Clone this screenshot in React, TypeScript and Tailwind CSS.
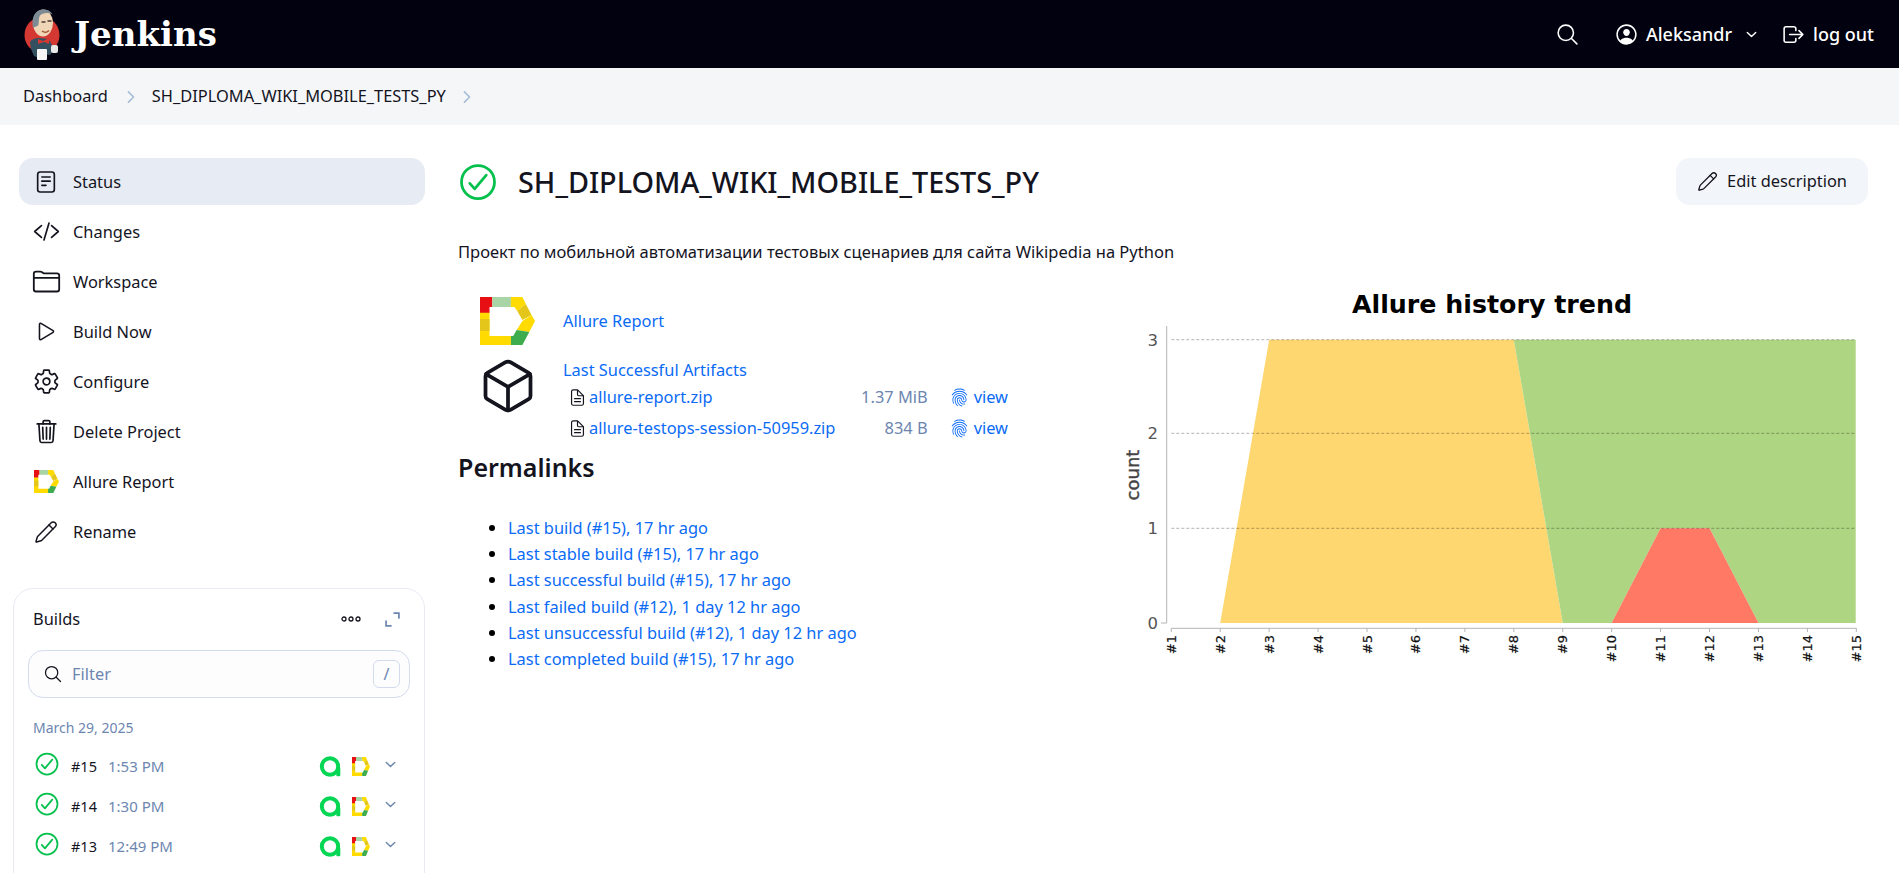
import React from "react";
import {
  IoCheckmarkCircleOutline,
  IoChevronDown,
  IoChevronForward,
  IoCodeSlashOutline,
  IoCubeOutline,
  IoDocumentTextOutline,
  IoFingerPrintOutline,
  IoFolderOutline,
  IoLogOutOutline,
  IoPersonCircleOutline,
  IoPlayOutline,
  IoSearchOutline,
  IoSettingsOutline,
  IoTrashOutline,
} from "react-icons/io5";
import { Pencil } from "lucide-react";

function AllureIcon({ className }: { className?: string }) {
  return (
    <svg viewBox="0 0 48 48" preserveAspectRatio="none" className={className}>
      <polygon fill="#ffdb00" points="0,15 8.3,15 8.3,39 27,39 27,48 0,48" />
      <polygon fill="#e3c619" points="0,22 8.3,22 8.3,34 0,34" />
      <polygon fill="#e70f14" points="0,0 10.7,0 10.7,10 8.3,10 8.3,15.7 0,15.7" />
      <polygon fill="#a9d5a6" points="10.7,0 27,0 27,10 10.7,10" />
      <polygon fill="#ffdb00" points="27,0 37,0 40,7 32.5,14 30,10 27,10" />
      <polygon fill="#e3c619" points="40,7 45,18 37,23 32.5,14" />
      <polygon fill="#ffdb00" points="45,18 48,24 43,35 32,33 37,24" />
      <polygon fill="#3dac4f" points="32,33 43,35 37,48 27,48 27,39 29,39" />
    </svg>
  );
}

function AqaIcon() {
  return (
    <svg viewBox="0 0 20 20" className="w-[22px] h-[21px]">
      <circle cx="10" cy="10" r="7.8" fill="none" stroke="#05d653" strokeWidth="3.8" />
      <rect x="16" y="11" width="3.8" height="8.4" rx="1" fill="#05d653" />
    </svg>
  );
}

function StatusDoc() {
  return (
    <svg viewBox="0 0 24 28" className="w-[20px] h-[24px]" fill="none" stroke="#14141f" strokeWidth="2" strokeLinecap="round">
      <rect x="2" y="2" width="20" height="24" rx="3" />
      <path d="M7 8h10M7 13h10M7 18h5" />
    </svg>
  );
}

function JenkinsLogo() {
  return (
    <svg viewBox="0 0 40 52" className="w-[40px] h-[52px]">
      <ellipse cx="19" cy="27" rx="17.5" ry="18" fill="#d33833" />
      <path d="M7 34c2-3 5-4 9-4l9 1c3 3 5 7 5 12l-3 4-6-1-3 5-7-3-3-7z" fill="#335061" />
      <ellipse cx="20" cy="15" rx="10" ry="13.5" fill="#f0d6b7" />
      <path d="M10 20C8 9 12 2 20 1.5c5-.3 8 2 9.5 5-5-2.5-10-1.5-12.5 1-1.5 2-1 6-1.5 9-.5 2-3.5 2-5.5 3.5z" fill="#7d8b94" />
      <path d="M19 14h3M25 13h3" stroke="#4a3b32" strokeWidth="1.4" strokeLinecap="round" />
      <path d="M19 23c2 1.5 5 1.5 7-.5" stroke="#a0522d" strokeWidth="1.2" fill="none" />
      <path d="M15 31l5 2 6-3v6l-5-2-6 2z" fill="#d33833" />
      <rect x="14" y="41" width="10" height="11" rx="1" fill="#f6f6f6" />
      <rect x="28" y="37" width="7" height="8" rx="2" fill="#e8e8e8" />
    </svg>
  );
}

function Task({ icon, label, active }: { icon: React.ReactNode; label: string; active?: boolean }) {
  return (
    <div className={`flex items-center h-[47px] rounded-[14px] pl-[12px] ${active ? "bg-[#e7ebf3]" : ""}`}>
      <span className="w-[30px] flex justify-center text-[#14141f]">{icon}</span>
      <span className="ml-[12px] pt-[1px] text-[#14141f]">{label}</span>
    </div>
  );
}

const TASKS: { icon: React.ReactNode; label: string; active?: boolean }[] = [
  { icon: <StatusDoc />, label: "Status", active: true },
  { icon: <IoCodeSlashOutline size={27} />, label: "Changes" },
  { icon: <IoFolderOutline size={29} />, label: "Workspace" },
  { icon: <IoPlayOutline size={25} />, label: "Build Now" },
  { icon: <IoSettingsOutline size={27} />, label: "Configure" },
  { icon: <IoTrashOutline size={27} />, label: "Delete Project" },
  { icon: <AllureIcon className="w-[25px] h-[23px]" />, label: "Allure Report" },
  { icon: <Pencil size={24} strokeWidth={1.5} />, label: "Rename" },
];

const BUILDS = [
  { num: "#15", time: "1:53 PM" },
  { num: "#14", time: "1:30 PM" },
  { num: "#13", time: "12:49 PM" },
];

const PERMALINKS = [
  "Last build (#15), 17 hr ago",
  "Last stable build (#15), 17 hr ago",
  "Last successful build (#15), 17 hr ago",
  "Last failed build (#12), 1 day 12 hr ago",
  "Last unsuccessful build (#12), 1 day 12 hr ago",
  "Last completed build (#15), 17 hr ago",
];

const ARTIFACTS = [
  { name: "allure-report.zip", size: "1.37 MiB" },
  { name: "allure-testops-session-50959.zip", size: "834 B" },
];

function TrendChart() {
  // pixel positions read off the build numbers on the x axis
  const xs = Array.from({ length: 15 }, (_, i) => 61.3 + i * 48.93);
  const Y = [343, 248.3, 153.3, 59.7];
  const X = (build: number) => xs[build - 1];
  return (
    <svg viewBox="0 0 760 390" className="w-[760px] h-[390px] -mr-[2px]" style={{ fontFamily: '"DejaVu Sans", sans-serif' }}>
      <text x="382" y="33" textAnchor="middle" fontSize="25.3" fontWeight="700" fill="#000">
        Allure history trend
      </text>
      <line x1="56.7" y1="46" x2="56.7" y2="343" stroke="#b5b5b5" />
      <line x1="51" y1="343" x2="56.7" y2="343" stroke="#b5b5b5" />
      <line x1="61.3" y1="348.3" x2="746.3" y2="348.3" stroke="#b5b5b5" />
      <polygon fill="#ffd770" points={`${X(2)},${Y[0]} ${X(3)},${Y[3]} ${X(8)},${Y[3]} ${X(9)},${Y[0]}`} />
      <polygon
        fill="#aed581"
        points={`${X(8)},${Y[3]} 745.7,${Y[3]} 745.7,${Y[0]} ${X(13)},${Y[0]} ${X(12)},${Y[1]} ${X(11)},${Y[1]} ${X(10)},${Y[0]} ${X(9)},${Y[0]}`}
      />
      <polygon fill="#ff7964" points={`${X(10)},${Y[0]} ${X(11)},${Y[1]} ${X(12)},${Y[1]} ${X(13)},${Y[0]}`} />
      {[1, 2, 3].map((n) => (
        <line key={n} x1="61.3" y1={Y[n]} x2="745.7" y2={Y[n]} stroke="#000" strokeOpacity="0.3" strokeDasharray="3 2" />
      ))}
      {[0, 1, 2, 3].map((n) => (
        <text key={n} x="48" y={Y[n] + 6} textAnchor="end" fontSize="16.5" fill="#555">
          {n}
        </text>
      ))}
      <text transform="translate(29,195) rotate(-90)" textAnchor="middle" fontSize="18" fill="#444" stroke="#444" strokeWidth="0.4">
        count
      </text>
      {xs.map((x, i) => (
        <g key={i}>
          <line x1={x} y1="348" x2={x} y2="352" stroke="#b5b5b5" />
          <text transform={`translate(${x + 4.5},355) rotate(-90)`} textAnchor="end" fontSize="13" fill="#111" stroke="#111" strokeWidth="0.2">
            #{i + 1}
          </text>
        </g>
      ))}
    </svg>
  );
}

export default function App() {
  return (
    <div className="h-screen overflow-hidden bg-white text-[16.4px] text-[#14141f]" style={{ fontFamily: '"Noto Sans", sans-serif' }}>
      <header className="h-[68px] bg-[#01010f] flex items-center justify-between pl-[23px] pr-[25px] text-white">
        <div className="flex items-center">
          <JenkinsLogo />
          <span className="ml-[11px] text-[34px] font-bold" style={{ fontFamily: '"DejaVu Serif", serif' }}>
            Jenkins
          </span>
        </div>
        <div className="flex items-center text-[18px] font-medium">
          <IoSearchOutline size={25} />
          <IoPersonCircleOutline size={25} className="ml-[34px]" />
          <span className="ml-[7px]">Aleksandr</span>
          <IoChevronDown size={15} className="ml-[12px]" />
          <IoLogOutOutline size={25} className="ml-[22px]" />
          <span className="ml-[7px]">log out</span>
        </div>
      </header>

      <nav className="h-[57px] bg-[#f5f6f8] flex items-center pl-[23px]">
        <span>Dashboard</span>
        <IoChevronForward size={18} className="ml-[14px] mr-[12px] text-[#a9bcd8]" />
        <span>SH_DIPLOMA_WIKI_MOBILE_TESTS_PY</span>
        <IoChevronForward size={18} className="ml-[12px] text-[#a9bcd8]" />
      </nav>

      <div className="flex">
        <aside className="w-[458px] shrink-0 pl-[13px] pr-[33px] pt-[33px]">
          <div className="flex flex-col gap-[3px] pl-[6px]">
            {TASKS.map((t) => (
              <Task key={t.label} {...t} />
            ))}
          </div>

          <section className="mt-[33px] border border-[#e8ebf3] rounded-[20px] px-[14px] pt-[18px] pb-[60px]">
            <div className="flex items-center justify-between pl-[5px] pr-[10px]">
              <span>Builds</span>
              <div className="flex items-center gap-[24px]">
                <svg viewBox="0 0 20 6" className="w-[20px] h-[6px]" fill="none" stroke="#14141f" strokeWidth="1.3">
                  <circle cx="3" cy="3" r="2" />
                  <circle cx="10" cy="3" r="2" />
                  <circle cx="17" cy="3" r="2" />
                </svg>
                <svg viewBox="0 0 14 14" className="w-[15px] h-[15px]" fill="none" stroke="#6d86b0" strokeWidth="1.6" strokeLinecap="round">
                  <path d="M8.5 1H13v4.5M5.5 13H1V8.5" />
                </svg>
              </div>
            </div>
            <div className="mt-[18px] h-[48px] border border-[#d3dcec] rounded-[15px] bg-[#fdfdfe] flex items-center pl-[14px] pr-[9px]">
              <IoSearchOutline size={20} />
              <span className="ml-[9px] pt-[2px] text-[#6d86b0]">Filter</span>
              <span className="ml-auto w-[27px] h-[28px] border border-[#d3dcec] rounded-[6px] flex items-center justify-center text-[16px] text-[#6d86b0]">
                /
              </span>
            </div>
            <div className="mt-[19px] pl-[5px] text-[14px] text-[#6d86b0]">March 29, 2025</div>
            <div className="mt-[9px]">
              {BUILDS.map((b) => (
                <div key={b.num} className="h-[40px] flex items-center pl-[5px] pr-[12px] text-[15px]">
                  <IoCheckmarkCircleOutline size={28} className="text-[#05c04c] -mt-[5px]" />
                  <span className="ml-[10px] text-[14.5px]">{b.num}</span>
                  <span className="ml-[11px] text-[#6d86b0]">{b.time}</span>
                  <span className="ml-auto flex items-center">
                    <AqaIcon />
                    <AllureIcon className="ml-[11px] w-[18px] h-[19px]" />
                    <IoChevronDown size={15} className="ml-[13px] -mt-[4px] text-[#6d86b0]" />
                  </span>
                </div>
              ))}
            </div>
          </section>
        </aside>

        <main className="flex-1 pr-[34px] pt-[33px]">
          <div className="flex items-center justify-between h-[47px]">
            <div className="flex items-center -ml-[2px]">
              <IoCheckmarkCircleOutline size={44} className="text-[#05c04c]" />
              <h1 className="ml-[18px] text-[28.8px] font-medium">SH_DIPLOMA_WIKI_MOBILE_TESTS_PY</h1>
            </div>
            <button className="h-[47px] w-[192px] rounded-[14px] bg-[#f2f5f9] flex items-center justify-center">
              <Pencil size={21} strokeWidth={1.5} />
              <span className="ml-[9px]">Edit description</span>
            </button>
          </div>
          <p className="mt-[35px] leading-[24px] text-[16.5px]">
            Проект по мобильной автоматизации тестовых сценариев для сайта Wikipedia на Python
          </p>

          <div className="flex mt-[16px]">
            <div className="w-[652px] shrink-0 pt-[11px]">
              <div className="flex items-center h-[60px]">
                <AllureIcon className="ml-[22px] w-[55px] h-[48px]" />
                <a className="ml-[28px] pt-[1px] text-[#0b6bf5]">Allure Report</a>
              </div>
              <div className="flex">
                <IoCubeOutline size={60} className="ml-[20px] mt-[5px] shrink-0" />
                <div className="ml-[25px] flex-1">
                  <a className="block leading-[24px] mt-[7px] text-[#0b6bf5]">Last Successful Artifacts</a>
                  {ARTIFACTS.map((a) => (
                    <div key={a.name} className="flex items-center h-[31px] pl-[5px]">
                      <IoDocumentTextOutline size={19} className="shrink-0" />
                      <a className="ml-[2px] text-[#0b6bf5]">{a.name}</a>
                      <span className="ml-auto text-[#6d86b0]">{a.size}</span>
                      <IoFingerPrintOutline size={19} className="ml-[22px] text-[#0b6bf5]" />
                      <a className="ml-[5px] mr-[102px] text-[#0b6bf5]">view</a>
                    </div>
                  ))}
                </div>
              </div>
              <h2 className="text-[25px] font-semibold leading-[32px] mt-[7px]">Permalinks</h2>
              <ul className="list-disc pl-[50px] mt-[32px]">
                {PERMALINKS.map((p) => (
                  <li key={p} className="leading-[26.2px] text-[#0b6bf5] marker:text-black">
                    {p}
                  </li>
                ))}
              </ul>
            </div>
            <TrendChart />
          </div>
        </main>
      </div>
    </div>
  );
}
